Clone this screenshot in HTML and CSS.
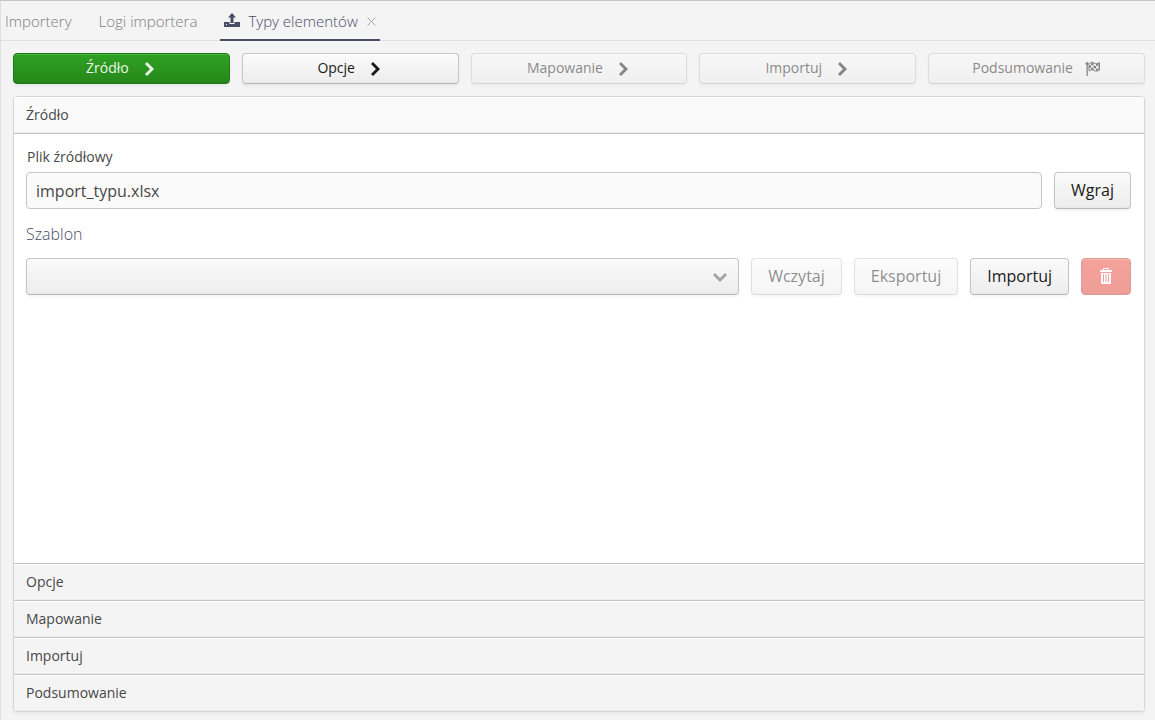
FILE: index.html
```html
<!DOCTYPE html>
<html lang="pl">
  <head>
    <meta charset="UTF-8" />
    <meta name="viewport" content="width=device-width, initial-scale=1.0" />
    <title>Typy elementów</title>
    <link rel="stylesheet" href="styles.css">
  </head>
  <body>
    <nav class="tabs">
      <a href="#importery" class="tab">Importery</a>
      <a href="#logi" class="tab">Logi importera</a>
      <div class="tab active">
        <svg class="tab-icon" width="16" height="16" viewBox="0 0 16 16" fill="currentColor">
          <path d="M8 0l4 4.500h-2.500V10h-3V4.500H4z" />
          <path fill-rule="evenodd" d="M0 9h5.500v2h5V9H16v5H0zM2 11v1h1v-1z" />
        </svg>
        <a href="#typy">Typy elementów</a>
        <button class="tab-close" aria-label="Zamknij">
          <svg width="9" height="9" viewBox="0 0 9 9" fill="none" stroke="currentColor">
            <path d="M.5.5l8 8M8.500.5l-8 8" />
          </svg>
        </button>
      </div>
    </nav>

    <main class="content">
      <div class="steps">
        <button class="button step primary">
          Źródło
          <svg width="16" height="16" viewBox="0 0 16 16" fill="currentColor"><path d="M6 2L4 4l5 5-5 5 2 2 7-7z" /></svg>
        </button>
        <button class="button step">
          Opcje
          <svg width="16" height="16" viewBox="0 0 16 16" fill="currentColor"><path d="M6 2L4 4l5 5-5 5 2 2 7-7z" /></svg>
        </button>
        <button class="button step" disabled>
          Mapowanie
          <svg width="16" height="16" viewBox="0 0 16 16" fill="currentColor"><path d="M6 2L4 4l5 5-5 5 2 2 7-7z" /></svg>
        </button>
        <button class="button step" disabled>
          Importuj
          <svg width="16" height="16" viewBox="0 0 16 16" fill="currentColor"><path d="M6 2L4 4l5 5-5 5 2 2 7-7z" /></svg>
        </button>
        <button class="button step" disabled>
          Podsumowanie
          <svg width="16" height="16" viewBox="0 0 16 16" fill="currentColor">
            <circle cx="2" cy="3.500" r="1.500" />
            <path d="M1.500 4h1.300v12H1.500z" />
            <path d="M4 3.500C6 2 7.500 2 9 3s3.500 1 5.500-.5V10c-2 1.500-4 1.300-5.500.5s-3-1-5 .5z" fill="none" stroke="currentColor" />
            <path d="M6 2.500l2.500.5v2.500L6 5zM11 3.500l2.500-.2v2.500l-2.500.2zM4 5.800L6 5v2.500l-2 .8zM8.500 5.500l2.500.5v2.500L8.500 8zM13.500 5.700l1-.7v2.500l-1 .7zM6 7.500l2.500.5v2L6 9.700zM11 8.500l2.500-.3v2.300l-2.500.3z" />
          </svg>
        </button>
      </div>

      <div class="accordion">
        <button class="accordion-header open" aria-expanded="true">Źródło</button>
        <form class="source-form">
          <label class="caption" for="file">Plik źródłowy</label>
          <div class="row">
            <input class="text-field" id="file" type="text" value="import_typu.xlsx" readonly>
            <button class="button" type="button">Wgraj</button>
          </div>
          <label class="label" for="template">Szablon</label>
          <div class="row">
            <div class="select-wrap">
              <select class="select" id="template">
                <option value=""></option>
              </select>
              <svg class="select-arrow" width="16" height="16" viewBox="0 0 16 16" fill="currentColor"><path d="M1 6l2-2 5 5 5-5 2 2-7 7z" /></svg>
            </div>
            <button class="button" type="button" disabled>Wczytaj</button>
            <button class="button" type="button" disabled>Eksportuj</button>
            <button class="button" type="button">Importuj</button>
            <button class="button danger" type="button" aria-label="Usuń" disabled>
              <svg width="16" height="16" viewBox="0 0 16 16" fill="currentColor">
                <path fill-rule="evenodd" d="M5 2V1q0-1 1-1h4q1 0 1 1v1h2q1 0 1 1v1H2V3q0-1 1-1zM6 1v1h4V1z" />
                <path fill-rule="evenodd" d="M3 5h10v10q0 1-1 1H4q-1 0-1-1zM5 6v8h1V6zM7 6v8h2V6zM10 6v8h1V6z" />
                <path d="M7.500 6h1v8h-1z" />
              </svg>
            </button>
          </div>
        </form>
        <button class="accordion-header">Opcje</button>
        <button class="accordion-header">Mapowanie</button>
        <button class="accordion-header">Importuj</button>
        <button class="accordion-header">Podsumowanie</button>
      </div>
    </main>
  </body>
</html>
```
FILE: styles.css
```css
* {
  box-sizing: border-box;
}
body {
  display: flex;
  flex-direction: column;
  min-height: 100vh;
  margin: 0;
  border-top: 1px solid #c5c5c5;
  border-left: 1px solid #dfdfdf;
  background: #f4f4f4;
  color: #474747;
  font-family: "Open Sans", sans-serif;
  font-size: 16px;
  font-weight: 400;
}
button,
input,
select {
  font: inherit;
}
svg {
  display: block;
  flex: none;
}

/* Tabs */
.tabs {
  display: flex;
  gap: 19px;
  height: 40px;
  border-bottom: 1px solid #dfdfdf;
}
.tab {
  display: flex;
  align-items: center;
  height: 40px;
  padding: 0 4px;
  color: #7d7d7d;
  font-size: 15px;
  font-weight: 300;
  text-decoration: none;
}
.tab a {
  color: inherit;
  text-decoration: none;
}
.tab.active {
  padding-top: 2px;
  border-bottom: 2px solid #4b4c69;
  color: #4b4c69;
}
.tab-icon {
  margin-right: 8px;
}
.tab-close {
  margin-left: 9px;
  padding: 0;
  border: 0;
  background: none;
  color: #a5a5a5;
  cursor: pointer;
}

.content {
  display: flex;
  flex: 1;
  flex-direction: column;
  gap: 12px;
  padding: 12px 10px 8px 12px;
}

/* Buttons */
.button {
  display: flex;
  flex: none;
  align-items: center;
  justify-content: center;
  height: 37px;
  padding: 0 16px 2px;
  border: 1px solid #c5c5c5;
  border-bottom-color: #b8b8b8;
  border-radius: 4px;
  background: linear-gradient(#fafafa, #ededed);
  box-shadow: inset 0 1px 0 #fff, inset 0 -1px 0 #e8e8e8, 0 2px 3px rgba(0, 0, 0, 0.05);
  color: #191919;
  cursor: pointer;
}
.button:disabled {
  opacity: 0.5;
  cursor: default;
}
.button.danger {
  border-color: #bb382e;
  background: linear-gradient(#ed473b, #e13e32);
  box-shadow: inset 0 1px 0 #f3695f, inset 0 -1px 0 #d4382d;
  color: #fff;
}
.steps {
  display: grid;
  grid-template-columns: repeat(5, 1fr);
  gap: 12px;
}
.step {
  gap: 12px;
  height: 31px;
  font-size: 14px;
}
.step.primary {
  border-color: #227819;
  background: linear-gradient(#2fa123, #26881b);
  box-shadow: inset 0 1px 0 #43b536, inset 0 -1px 0 #237d19, 0 2px 3px rgba(0, 0, 0, 0.05);
  color: #eaf6e8;
}

/* Accordion */
.accordion {
  display: flex;
  flex: 1;
  flex-direction: column;
  overflow: hidden;
  border: 1px solid #d5d5d5;
  border-radius: 4px;
  background: #fff;
  box-shadow: 0 2px 3px rgba(0, 0, 0, 0.05);
}
.accordion-header {
  height: 37px;
  padding: 0 12px 2px;
  border: 0;
  border-top: 1px solid #c5c5c5;
  background: #f4f4f4;
  box-shadow: inset 0 1px 0 #fff, inset 0 -1px 0 #ebebeb;
  color: #474747;
  font-size: 14px;
  text-align: left;
  cursor: pointer;
}
.accordion-header.open {
  border-top: 0;
  border-bottom: 1px solid #c5c5c5;
  background: #fafafa;
}

/* Source form */
.source-form {
  display: flex;
  flex: 1;
  flex-direction: column;
  padding: 13px 13px 12px 12px;
}
.caption {
  padding: 0 1px;
  margin-bottom: 5px;
  font-size: 14px;
  line-height: 20px;
}
.label {
  margin: 13px 0 12px;
  color: #4b4c69;
  font-weight: 300;
  line-height: 24px;
}
.row {
  display: flex;
  gap: 12px;
}
.text-field {
  flex: 1;
  min-width: 0;
  height: 37px;
  padding: 0 9px;
  border: 1px solid #c5c5c5;
  border-radius: 4px;
  background: #fafafa;
  color: #474747;
}
.select-wrap {
  position: relative;
  flex: 1;
}
.select {
  width: 100%;
  height: 37px;
  padding: 0 37px 0 9px;
  border: 1px solid #c5c5c5;
  border-bottom-color: #b8b8b8;
  border-radius: 4px;
  background: linear-gradient(#fafafa, #ededed);
  box-shadow: inset 0 1px 0 #fff, inset 0 -1px 0 #e8e8e8, 0 2px 3px rgba(0, 0, 0, 0.05);
  appearance: none;
}
.select-arrow {
  position: absolute;
  top: 11px;
  right: 11px;
  color: #a3a3a3;
  pointer-events: none;
}
```
